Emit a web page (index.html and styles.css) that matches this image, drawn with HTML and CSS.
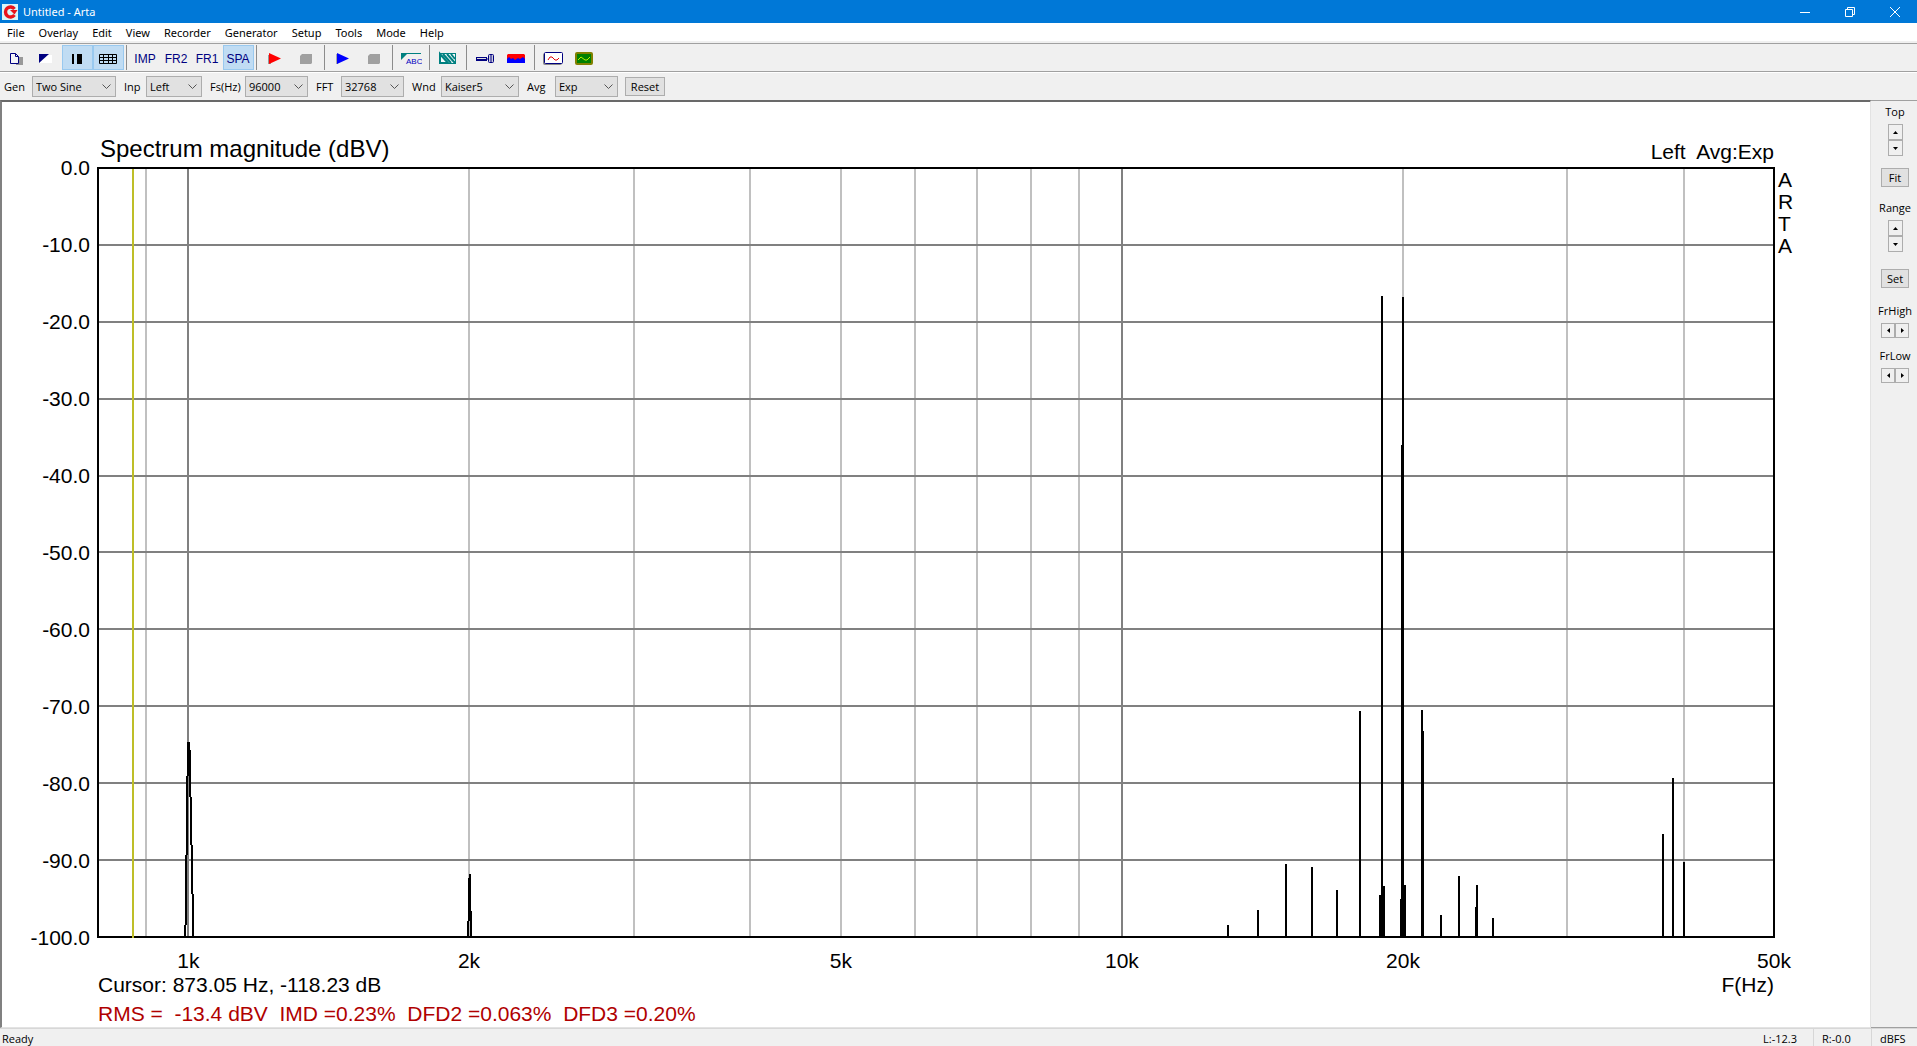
FILE: index.html
```html
<!DOCTYPE html>
<html lang="en">
<head>
<meta charset="utf-8">
<title>Untitled - Arta</title>
<link rel="stylesheet" href="styles.css">
</head>
<body>
<div class="window">
  <header class="titlebar">
    <svg class="app-icon" width="16" height="16" viewBox="0 0 16 16"><rect width="16" height="16" fill="#d8f6fa"/><path d="M12.500 5A5 5 0 1 0 12.500 11" fill="none" stroke="#e8141c" stroke-width="3.400"/><path d="M8 6h7.500l-3 4.500z" fill="#e8141c"/></svg>
    <h1 class="title">Untitled - Arta</h1>
    <button class="win-btn" aria-label="Minimize"><svg width="12" height="12" viewBox="0 0 12 12"><path d="M1 6.500h10"/></svg></button>
    <button class="win-btn" aria-label="Restore"><svg width="12" height="12" viewBox="0 0 12 12"><path d="M1.500 3.500h7v7h-7zM3.500 3V1.500h7v7H9"/></svg></button>
    <button class="win-btn" aria-label="Close"><svg width="12" height="12" viewBox="0 0 12 12"><path d="M1 1l10 10M11 1L1 11"/></svg></button>
  </header>

  <nav class="menubar">
    <button>File</button><button>Overlay</button><button>Edit</button><button>View</button><button>Recorder</button><button>Generator</button><button>Setup</button><button>Tools</button><button>Mode</button><button>Help</button>
  </nav>

  <div class="toolbar">
    <button class="tool" aria-label="Copy"><svg width="16" height="16" viewBox="-2 0 16 16"><path d="M7 6h7v8H7z" fill="#999"/><path d="M1.500 2.500h5l3 3v7h-8z" fill="#f4f4f8" stroke="#000080"/><path d="M6.500 2.500v3h3" fill="none" stroke="#000080"/></svg></button>
    <button class="tool" aria-label="Invert background"><svg width="16" height="16" viewBox="0 0 16 16"><path d="M2 4h12v8H2z" fill="#fff"/><path d="M1 3h10L1 12z" fill="#000080"/></svg></button>
    <button class="tool on" aria-label="Line width"><svg width="16" height="16" viewBox="0 0 16 16"><path d="M3 3h2v10H3zM8 3h5v10H8z" fill="#000"/></svg></button>
    <button class="tool on" aria-label="Grid"><svg width="18" height="16" viewBox="0 0 18 16"><path d="M.5 3.500h17v9H.5zM.5 6.500h17M.5 9.500h17M4.500 3v10M9.500 3v10M13.500 3v10" fill="none" stroke="#000"/></svg></button>
    <span class="sep"></span>
    <button class="tool">IMP</button>
    <button class="tool">FR2</button>
    <button class="tool">FR1</button>
    <button class="tool on">SPA</button>
    <span class="sep"></span>
    <button class="tool" aria-label="Record"><svg width="16" height="16" viewBox="0 0 16 16"><path d="M1 4h3v9H1z" fill="#999"/><path d="M2 2l12 5.500L2 13z" fill="#f00"/></svg></button>
    <button class="tool" aria-label="Stop"><svg width="16" height="16" viewBox="0 0 16 16"><path d="M4 3h10v9l-1 1H2V5z" fill="#a0a0a0"/></svg></button>
    <span class="sep"></span>
    <button class="tool" aria-label="Play generator"><svg width="16" height="16" viewBox="0 0 16 16"><path d="M1 3h2v10H1z" fill="#aaa"/><path d="M2 2l12 5.500L2 13z" fill="#00f"/></svg></button>
    <button class="tool" aria-label="Stop generator"><svg width="16" height="16" viewBox="0 0 16 16"><path d="M4 3h10v9l-1 1H2V5z" fill="#a0a0a0"/></svg></button>
    <span class="sep"></span>
    <button class="tool" aria-label="Overlay text"><svg width="22" height="16" viewBox="0 0 22 16"><path d="M1 2h20v1H7L1 9z" fill="#008080"/><text x="6" y="13" class="abc">ABC</text></svg></button>
    <span class="sep"></span>
    <button class="tool" aria-label="Overlay"><svg width="18" height="16" viewBox="0 0 18 16"><path d="M1 3h16v10H1z" fill="#f4fafa"/><path d="M1 2.500h16M1 12.500h16M16.500 3v10" stroke="#008080" fill="none"/><path d="M1 3v9h8zM4 3l8 9M8 3l8 9M12 3l4 5" fill="none" stroke="#008080" stroke-width="2"/></svg></button>
    <span class="sep"></span>
    <button class="tool" aria-label="Microphone"><svg width="18" height="16" viewBox="0 0 18 16"><path d="M0 6h11v4H0z" fill="#000080"/><path d="M1 7h9v1H1z" fill="#ddd"/><rect x="12.500" y="3.500" width="5" height="8" rx="1" fill="#ccd" stroke="#000080"/><path d="M10 8h3M15 4v7" stroke="#000080"/></svg></button>
    <button class="tool" aria-label="Spectrum"><svg width="18" height="16" viewBox="0 0 18 16"><path d="M1 3h16l1 1v6H0V4z" fill="#f00"/><path d="M0 8l2-2 2 2 2-1 2 2 3-2 2 1 3-2 2 2v4H0z" fill="#00f"/></svg></button>
    <span class="sep"></span>
    <button class="tool" aria-label="Signal"><svg width="20" height="16" viewBox="0 0 20 16"><rect x=".5" y="2.500" width="18" height="11" rx="1" fill="#999" stroke="#888"/><rect x="1.500" y="1.500" width="18" height="11" rx="1" fill="#fff" stroke="#000080"/><path d="M5 9l2-3h2l3 3h2l2-2" fill="none" stroke="#e00000"/></svg></button>
    <button class="tool" aria-label="Scope"><svg width="18" height="16" viewBox="0 0 18 16"><rect x="1" y="2" width="16" height="11" rx="1" fill="#008000" stroke="#808000" stroke-width="2"/><path d="M3 9l3-3 4 3h2l3-3" fill="none" stroke="#b8f000"/></svg></button>
  </div>

  <form class="settings">
    <label class="first" for="gen">Gen</label><span class="combo"><select id="gen"><option>Two Sine</option></select><svg viewBox="0 0 9 6"><path d="M.5.500l4 4 4-4"/></svg></span>
    <label for="inp">Inp</label><span class="combo"><select id="inp"><option>Left</option></select><svg viewBox="0 0 9 6"><path d="M.5.500l4 4 4-4"/></svg></span>
    <label for="fs">Fs(Hz)</label><span class="combo"><select id="fs"><option>96000</option></select><svg viewBox="0 0 9 6"><path d="M.5.500l4 4 4-4"/></svg></span>
    <label for="fft">FFT</label><span class="combo"><select id="fft"><option>32768</option></select><svg viewBox="0 0 9 6"><path d="M.5.500l4 4 4-4"/></svg></span>
    <label for="wnd">Wnd</label><span class="combo"><select id="wnd"><option>Kaiser5</option></select><svg viewBox="0 0 9 6"><path d="M.5.500l4 4 4-4"/></svg></span>
    <label for="avg">Avg</label><span class="combo"><select id="avg"><option>Exp</option></select><svg viewBox="0 0 9 6"><path d="M.5.500l4 4 4-4"/></svg></span>
    <button type="button" class="btn reset">Reset</button>
  </form>

  <div class="content">
    <main class="view">
      <div class="plot-head"><h2>Spectrum magnitude (dBV)</h2><span>Left  Avg:Exp</span></div>
      <div class="plot-row">
        <div class="y-axis"><span>0.0</span><span>-10.0</span><span>-20.0</span><span>-30.0</span><span>-40.0</span><span>-50.0</span><span>-60.0</span><span>-70.0</span><span>-80.0</span><span>-90.0</span><span>-100.0</span></div>
        <svg class="plot" viewBox="97 167 1678 771" preserveAspectRatio="none" role="img" aria-label="Spectrum magnitude plot">
          <path class="minor" d="M146 168V937M469 168V937M634 168V937M750 168V937M841 168V937M915 168V937M977 168V937M1031 168V937M1079 168V937M1403 168V937M1567 168V937M1684 168V937"/>
          <path class="major" d="M188 168V937M1122 168V937M98 245H1774M98 322H1774M98 399H1774M98 476H1774M98 552H1774M98 629H1774M98 706H1774M98 783H1774M98 860H1774"/>
          <path class="peak" d="M187 742h3v8h1v47h-2v-21h-2zM186 776h2v79h-2zM185 855h2v70h-2zM184 925h2v12h-2zM190 797h2v48h-2zM191 845h2v49h-2zM192 894h2v43h-2z"/>
          <path class="peak" d="M469 874h2v37h1v26h-2v-16h-1v16h-2v-16h1v-43h1z"/>
          <path class="peak" d="M1227 925h2v12h-2zM1257 910h2v27h-2zM1285 864h2v73h-2zM1311 867h2v70h-2zM1336 890h2v47h-2zM1359 711h2v226h-2z"/>
          <path class="peak" d="M1381 296h2v590h2v51h-6v-42h2zM1402 297h2v588h2v52h-6v-38h1v-454h1z"/>
          <path class="peak" d="M1421 710h2v21h1v206h-3zM1440 915h2v22h-2zM1458 876h2v61h-2zM1476 885h2v52h-3v-30h1zM1492 918h2v19h-2zM1662 834h2v103h-2zM1672 778h2v159h-2zM1683 862h2v75h-2z"/>
          <rect class="frame" x="98" y="168" width="1676" height="769"/>
          <path class="cursor" d="M133 169V938"/>
        </svg>
        <div class="brand"><span>A</span><span>R</span><span>T</span><span>A</span></div>
      </div>
      <div class="x-axis">
        <span style="left:5.45%">1k</span><span style="left:22.17%">2k</span><span style="left:44.33%">5k</span><span style="left:61.08%">10k</span><span style="left:77.83%">20k</span><span style="left:99.94%">50k</span>
      </div>
      <div class="readout"><span>Cursor: 873.05 Hz, -118.23 dB</span><span>F(Hz)</span></div>
      <p class="result">RMS =  -13.4 dBV  IMD =0.23%  DFD2 =0.063%  DFD3 =0.20%</p>
    </main>

    <aside class="side">
      <div class="group"><span>Top</span>
        <div class="spin"><button aria-label="Top up"><svg viewBox="0 0 5 3"><path d="M0 3h5L2.500 0z"/></svg></button><button aria-label="Top down"><svg viewBox="0 0 5 3"><path d="M0 0h5L2.500 3z"/></svg></button></div>
        <button class="btn">Fit</button></div>
      <div class="group range"><span>Range</span>
        <div class="spin"><button aria-label="Range up"><svg viewBox="0 0 5 3"><path d="M0 3h5L2.500 0z"/></svg></button><button aria-label="Range down"><svg viewBox="0 0 5 3"><path d="M0 0h5L2.500 3z"/></svg></button></div>
        <button class="btn">Set</button></div>
      <div class="group freq"><span>FrHigh</span>
        <div class="spin across"><button aria-label="FrHigh lower"><svg viewBox="0 0 3 5"><path d="M3 0v5L0 2.500z"/></svg></button><button aria-label="FrHigh higher"><svg viewBox="0 0 3 5"><path d="M0 0v5l3-2.500z"/></svg></button></div></div>
      <div class="group freq"><span>FrLow</span>
        <div class="spin across"><button aria-label="FrLow lower"><svg viewBox="0 0 3 5"><path d="M3 0v5L0 2.500z"/></svg></button><button aria-label="FrLow higher"><svg viewBox="0 0 3 5"><path d="M0 0v5l3-2.500z"/></svg></button></div></div>
    </aside>
  </div>

  <footer class="status"><span class="ready">Ready</span><span>L:-12.3</span><span>R:-0.0</span><span>dBFS</span></footer>
</div>
</body>
</html>
```

FILE: styles.css
```css
* { box-sizing: border-box; }

body {
  margin: 0;
  background: #f0f0f0;
  color: #000;
  font: 11px/14px "Open Sans", "Noto Sans", sans-serif;
}

button, select {
  margin: 0;
  padding: 0;
  border: 0;
  border-radius: 0;
  background: none;
  color: inherit;
  font: inherit;
}

svg { display: block; }

.window {
  display: flex;
  flex-direction: column;
  min-height: 100vh;
}

/* Title bar */
.titlebar {
  display: flex;
  align-items: center;
  height: 23px;
  padding-left: 2px;
  background: #0078d7;
  color: #fff;
}
.title {
  flex: 1;
  margin: 0 0 0 5px;
  font-family: "Noto Sans", sans-serif;
  font-size: 11px;
  font-weight: 400;
}
.win-btn {
  display: flex;
  align-items: center;
  justify-content: center;
  width: 45px;
  height: 20px;
}
.win-btn svg { fill: none; stroke: #fff; }

/* Menu */
.menubar {
  display: flex;
  gap: 14px;
  height: 18px;
  margin-bottom: 2px;
  padding-left: 7px;
  background: #fff;
  font-family: "Noto Sans", sans-serif;
}
.menubar button { height: 20px; }

/* Icon toolbar */
.toolbar {
  display: flex;
  height: 29px;
  padding: 1px 0;
  border-top: 1px solid #a0a0a0;
  border-bottom: 1px solid #a0a0a0;
}
.tool {
  display: flex;
  align-items: center;
  justify-content: center;
  width: 31px;
  padding: 2px 1px 0 0;
  color: #000080;
  font: 12px/14px "Liberation Sans", Arial, sans-serif;
}
.tool.on {
  border: 1px solid #99c9ef;
  background: #c0dcf3;
}
.sep {
  width: 4px;
  margin-left: 2px;
  border-left: 1px solid #8c8c8c;
}
.abc {
  fill: #0000c0;
  font: 8px "Liberation Sans", Arial, sans-serif;
}

/* Measurement settings */
.settings {
  display: grid;
  grid-template-columns: 32px 84px 30px 56px 43px 63px 33px 63px 37px 78px 36px 63px 7px 40px;
  align-items: center;
  height: 28px;
  border-top: 1px solid #fff;
}
.settings label { padding-left: 8px; }
.settings .first { padding-left: 4px; }
.combo {
  position: relative;
  height: 21px;
}
.combo select {
  width: 100%;
  height: 21px;
  padding-left: 3px;
  border: 1px solid #adadad;
  background: #e1e1e1;
  appearance: none;
}
.combo svg {
  position: absolute;
  top: 8px;
  right: 5px;
  width: 9px;
  height: 6px;
  fill: none;
  stroke: #555;
  pointer-events: none;
}
.btn {
  width: 28px;
  height: 19px;
  border: 1px solid #adadad;
  background: #e1e1e1;
}
.reset {
  grid-column: 14;
  width: 40px;
}

/* Plot view */
.content {
  display: flex;
  flex: 1;
}
.view {
  display: flex;
  flex: 1;
  flex-direction: column;
  padding: 32px 0 1px;
  border-style: solid;
  border-width: 2px 1px 1px 2px;
  border-color: #696969 #e3e3e3 #e3e3e3 #808080;
  background: #fff;
  font: 21px/24px "Liberation Sans", Arial, sans-serif;
}
.plot-head span, .result { white-space: pre; }
.plot-head {
  display: flex;
  align-items: flex-end;
  justify-content: space-between;
  height: 33px;
  padding: 0 96px 3px 98px;
}
.plot-head h2 {
  margin: 0 0 1px;
  font-size: 24px;
  font-weight: 400;
  line-height: 28px;
}
.plot-row {
  display: grid;
  flex: 1;
  grid-template-columns: 88px minmax(0, 1fr) 88px;
  column-gap: 7px;
  min-height: 300px;
}
.y-axis {
  display: flex;
  flex-direction: column;
  justify-content: space-between;
  margin: -11px 0 -12px;
  text-align: right;
}
.plot {
  width: 100%;
  height: 100%;
  contain: size;
  shape-rendering: crispEdges;
  fill: none;
  stroke-width: 2px;
}
.minor { stroke: #c0c0c0; }
.major { stroke: #808080; }
.frame { stroke: #000; }
.cursor { stroke: #bebe28; }
.peak { fill: #000; }
.brand {
  display: flex;
  flex-direction: column;
  margin-left: -4px;
  padding-top: 2px;
  line-height: 22px;
}
.x-axis {
  position: relative;
  height: 24px;
  margin: 11px 95px 0 95px;
}
.x-axis span {
  position: absolute;
  transform: translateX(-50%);
}
.readout {
  display: flex;
  justify-content: space-between;
  padding: 0 96px 5px;
}
.result {
  margin: 0 0 0 96px;
  color: #b00000;
}

/* Range controls */
.side {
  width: 46px;
  padding: 4px 0 0 2px;
  border-top: 1px solid #a0a0a0;
  border-bottom: 1px solid #a0a0a0;
}
.group {
  display: flex;
  flex-direction: column;
  align-items: center;
  margin-bottom: 14px;
}
.group > span { margin-bottom: 5px; }
.group .btn { margin-top: 12px; }
.range { margin-bottom: 16px; }
.range .btn { margin-top: 17px; }
.freq { margin-bottom: 11px; }
.spin {
  display: flex;
  flex-direction: column;
}
.across { flex-direction: row; }
.spin button {
  display: flex;
  align-items: center;
  justify-content: center;
  width: 15px;
  height: 16px;
  border: 1px solid #adadad;
}
.across button {
  width: 14px;
  height: 15px;
}
.spin svg { width: 5px; height: 3px; }
.across svg { width: 3px; height: 5px; }

/* Status bar */
.status {
  display: grid;
  grid-template-columns: 1fr 58px 58px 46px;
  height: 18px;
  border-top: 1px solid #d7d7d7;
  line-height: 20px;
}
.status span { height: 17px; }
.status span + span {
  padding-left: 8px;
  border-left: 1px solid #d7d7d7;
}
.status .ready { padding-left: 2px; }
.status .ready + span { border-left: 0; }
```
